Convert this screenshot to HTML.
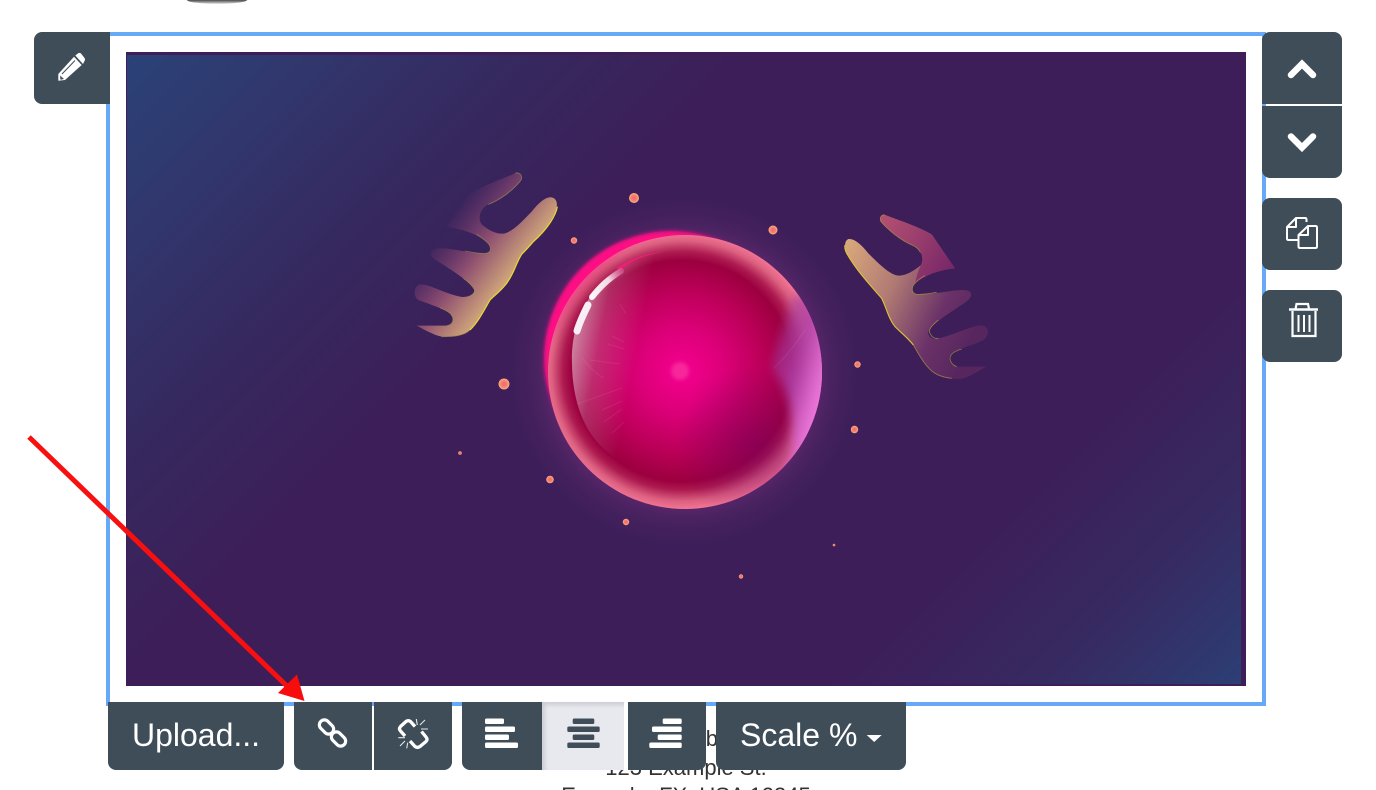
<!DOCTYPE html>
<html>
<head>
<meta charset="utf-8">
<style>
html,body{margin:0;padding:0;background:#fff;font-family:"Liberation Sans",sans-serif}
#p{position:relative;width:1376px;height:790px;overflow:hidden;background:#fff}
.t{position:absolute;left:386px;width:600px;text-align:center;font-size:22px;line-height:28px;color:#333;white-space:nowrap}
.frame{position:absolute;left:106px;top:32px;width:1152px;height:666px;border:4px solid #66a9f8}
.b{position:absolute;background:#3f4d58;color:#fff;font-size:32px;line-height:66px;text-align:center}
svg{position:absolute;left:0;top:0}
</style>
</head>
<body>
<div id="p">
<div class="t" style="top:725px;left:118px;text-align:right">Example Inc. Ab</div>
<div class="t" style="top:754px">123 Example St.</div>
<div class="t" style="top:782px">Example, FX, USA 12345</div>
<div class="frame"></div>

<svg width="1376" height="790" viewBox="0 0 1376 790" style="z-index:1">
<defs>
<linearGradient id="bg" gradientUnits="userSpaceOnUse" x1="126" y1="52" x2="1003" y2="929">
<stop offset="0" stop-color="#2a4278"/><stop offset=".1" stop-color="#30386e"/><stop offset=".24" stop-color="#36285e"/><stop offset=".36" stop-color="#3d1e59"/><stop offset=".76" stop-color="#3d1e59"/><stop offset=".88" stop-color="#372a61"/><stop offset="1" stop-color="#2b3f75"/>
</linearGradient>
<radialGradient id="halo" gradientUnits="userSpaceOnUse" cx="684" cy="372" r="180">
<stop offset=".72" stop-color="#7a2d7c" stop-opacity=".6"/><stop offset=".84" stop-color="#5e2a6c" stop-opacity=".3"/><stop offset="1" stop-color="#4a2468" stop-opacity="0"/>
</radialGradient>
<radialGradient id="ball" gradientUnits="userSpaceOnUse" cx="682" cy="371" r="140">
<stop offset="0" stop-color="#f5008f"/><stop offset=".3" stop-color="#dc0078"/><stop offset=".58" stop-color="#bb0058"/><stop offset=".79" stop-color="#9c003f"/><stop offset=".85" stop-color="#ad1a50"/><stop offset=".93" stop-color="#dc6080"/><stop offset="1" stop-color="#f87a9a"/>
</radialGradient>
<linearGradient id="rightGlow" gradientUnits="userSpaceOnUse" x1="772" y1="370" x2="824" y2="385">
<stop offset="0" stop-color="#a03aa0" stop-opacity=".5"/><stop offset=".45" stop-color="#b040a8" stop-opacity=".9"/><stop offset="1" stop-color="#ee78dc"/>
</linearGradient>
<radialGradient id="lowerDark" gradientUnits="userSpaceOnUse" cx="755" cy="445" r="80">
<stop offset="0" stop-color="#7a0060" stop-opacity=".55"/><stop offset="1" stop-color="#7a0060" stop-opacity="0"/>
</radialGradient>
<linearGradient id="lobe" gradientUnits="userSpaceOnUse" x1="572" y1="350" x2="635" y2="362">
<stop offset="0" stop-color="#fff" stop-opacity=".5"/><stop offset=".4" stop-color="#fff" stop-opacity=".17"/><stop offset="1" stop-color="#fff" stop-opacity="0"/>
</linearGradient>
<linearGradient id="cres" gradientUnits="userSpaceOnUse" x1="590" y1="300" x2="548" y2="265">
<stop offset="0" stop-color="#ff0a84" stop-opacity="0"/><stop offset="1" stop-color="#ff0a84" stop-opacity=".8"/>
</linearGradient>
<linearGradient id="hl" gradientUnits="userSpaceOnUse" x1="592" y1="297" x2="622" y2="270">
<stop offset="0" stop-color="#fff" stop-opacity=".95"/><stop offset=".6" stop-color="#fff" stop-opacity=".8"/><stop offset="1" stop-color="#ff90d0" stop-opacity=".3"/>
</linearGradient>
<radialGradient id="dot"><stop offset="0" stop-color="#f5637a"/><stop offset=".55" stop-color="#f77f70"/><stop offset="1" stop-color="#f6b27a"/></radialGradient>
<linearGradient id="lh" gradientUnits="userSpaceOnUse" x1="176" y1="132" x2="376" y2="282">
<stop offset="0" stop-color="#7a3a70" stop-opacity=".08"/><stop offset=".5" stop-color="#8e4f70"/><stop offset="1" stop-color="#d2a87a"/>
</linearGradient>
<linearGradient id="rh" gradientUnits="userSpaceOnUse" x1="30" y1="100" x2="460" y2="290">
<stop offset="0" stop-color="#dcaa7c"/><stop offset=".4" stop-color="#b07a74"/><stop offset=".75" stop-color="#6a3268"/><stop offset="1" stop-color="#58265f"/>
</linearGradient>
<linearGradient id="rh2" gradientUnits="userSpaceOnUse" x1="140" y1="30" x2="350" y2="180">
<stop offset="0" stop-color="#b14470"/><stop offset="1" stop-color="#7a2468"/>
</linearGradient>
<linearGradient id="top" gradientUnits="userSpaceOnUse" x1="0" y1="0" x2="0" y2="3.800"><stop offset="0" stop-color="#4a4a4a"/><stop offset="1" stop-color="#d8d8d8"/></linearGradient>
<filter id="b1" x="-20%" y="-20%" width="140%" height="140%"><feGaussianBlur stdDeviation="1.800"/></filter>
<filter id="b5" x="-40%" y="-40%" width="180%" height="180%"><feGaussianBlur stdDeviation="5"/></filter>
<clipPath id="ballclip"><circle cx="685" cy="372" r="137"/></clipPath>
</defs>

<ellipse cx="217" cy="0" rx="30" ry="3.800" fill="url(#top)"/>

<rect x="126" y="52" width="1120" height="634" fill="#3f1d58"/>
<rect x="127" y="55" width="1114" height="629" fill="url(#bg)"/>

<circle cx="684" cy="372" r="180" fill="url(#halo)"/>
<circle cx="671" cy="358" r="127" fill="#ff0a84" filter="url(#b1)"/>
<circle cx="685" cy="372" r="137" fill="url(#ball)"/>

<g clip-path="url(#ballclip)">
<circle cx="755" cy="445" r="80" fill="url(#lowerDark)"/>
<path d="M792 295 C784 330 774 350 772 370 C786 385 796 410 792 455 L785 480 L830 470 L830 295 Z" fill="url(#rightGlow)" filter="url(#b5)"/>
<path d="M553 340 C565 295 600 255 650 240" stroke="url(#cres)" stroke-width="9" fill="none" filter="url(#b1)"/>
<path d="M572 365 C570 310 600 265 664 252 L680 370 L640 468 C590 455 573 410 572 365Z" fill="url(#lobe)"/>
<path d="M620 270 C632 260 648 254 664 252 C648 253 634 257 616 268 Z" fill="#f0207a" opacity=".9"/>
<g stroke="#fff" stroke-opacity=".08" stroke-width="1" fill="none">
<path d="M620 304 L626 314"/><path d="M612 336 L624 342"/><path d="M608 344 L624 349"/><path d="M590 360 L620 364"/><path d="M577 404 L622 388"/><path d="M602 410 L622 401"/><path d="M604 422 L622 409"/><path d="M612 433 L624 422"/><path d="M582 358 C590 368 598 375 604 378"/><path d="M774 368 C785 358 795 345 805 330"/>
</g>
</g>
<circle cx="680" cy="371" r="9" fill="#ff60b0" opacity=".4" filter="url(#b1)"/>
<path d="M592 297 C600 287 608 279 621 271" stroke="url(#hl)" stroke-width="6" fill="none" stroke-linecap="round"/>
<path d="M588 305 C584 313 580 321 577 331" stroke="#f8eef5" stroke-width="7" fill="none" stroke-linecap="round"/>

<g fill="url(#dot)">
<circle cx="634" cy="198" r="5"/><circle cx="773" cy="230" r="4.500"/><circle cx="574" cy="240.500" r="3.200"/><circle cx="504" cy="384" r="5.500"/><circle cx="857.500" cy="364.500" r="3.200"/><circle cx="854.500" cy="429.500" r="3.700"/><circle cx="460" cy="453" r="1.800"/><circle cx="550" cy="479.500" r="3.800"/><circle cx="626" cy="522" r="3.200"/><circle cx="834" cy="545" r="1.300"/><circle cx="741" cy="576.500" r="2.200"/>
</g>

<g transform="translate(400 165) scale(.33333)">
<path d="M140 185 L205 90 C240 65 300 45 345 25 C360 20 370 35 362 47 C340 75 300 105 265 118 C240 130 232 160 245 178 C265 195 290 210 315 205 C345 195 370 165 395 140 C415 115 435 95 455 97 C472 100 475 120 465 145 C445 190 400 230 365 268 C345 300 345 320 320 355 C300 380 285 390 270 405 C250 440 235 470 210 495 C190 515 150 515 125 515 C100 510 75 495 50 482 L140 482 C160 480 165 460 150 445 C130 430 80 415 55 405 C40 395 40 370 55 360 C75 350 130 385 180 395 C205 400 228 385 222 372 C200 340 130 300 100 280 C85 265 95 250 120 250 C150 248 190 262 240 265 C265 268 278 260 268 240 C250 215 200 195 140 185 Z" fill="url(#lh)"/>
<path d="M345 25 C360 20 370 35 362 47 C340 75 300 105 265 118 M195 258 C220 263 230 264 240 265 C265 268 278 260 268 240 C260 228 245 218 230 208 M205 397 C218 393 228 385 222 372 C215 358 205 350 190 340 M140 482 C160 480 165 460 150 445 C142 438 132 433 120 428 M210 495 C190 515 150 515 125 515" fill="none" stroke="#a09048" stroke-opacity=".7" stroke-width="2.500"/>
<path d="M472 125 C468 150 445 190 400 230 C385 248 375 258 365 268 C345 300 345 320 320 355 C300 380 285 390 270 405 C250 440 235 470 210 495" fill="none" stroke="#e8dc30" stroke-width="3.500"/>
</g>
<g transform="translate(835 205) scale(.33333)">
<path d="M360 190 L290 88 C250 65 190 45 150 30 C140 28 132 38 138 50 C160 75 195 105 235 122 C260 135 268 160 258 180 C240 195 215 212 190 212 C165 210 130 175 100 145 C80 120 60 100 40 102 C28 108 28 125 35 145 C60 190 100 235 140 280 C155 310 160 340 180 365 C200 385 220 400 235 420 C255 455 275 490 300 505 C325 520 365 525 385 520 C405 515 430 498 455 485 L365 485 C345 480 335 460 350 445 C370 430 420 420 445 405 C465 390 462 370 445 362 C420 355 350 395 300 402 C285 402 272 385 285 372 C310 340 370 310 400 285 C415 270 410 255 385 255 C350 255 290 270 245 268 C230 265 228 245 240 235 C270 210 310 195 360 190 Z" fill="url(#rh)"/>
<path d="M360 190 L290 88 C250 65 190 45 150 30 C140 28 132 38 138 50 C160 75 195 105 235 122 C260 135 268 160 258 180 C250 195 248 205 240 235 C270 210 310 195 360 190Z" fill="url(#rh2)" opacity=".85"/>
<path d="M150 30 C140 28 132 38 138 50 C160 75 195 105 235 122 C245 127 252 133 256 142 M270 212 C250 222 232 240 232 250 C230 262 238 267 245 268 C262 269 285 266 305 262 M310 345 C295 358 278 372 285 385 C290 396 298 402 310 400 M380 432 C362 438 345 445 345 460 C345 472 355 482 365 485 M235 420 C255 455 275 490 300 505 C315 514 335 518 350 520" fill="none" stroke="#a89040" stroke-opacity=".8" stroke-width="2.500"/>
<path d="M30 120 C28 128 30 135 35 145 C60 190 100 235 140 280 C155 310 160 340 180 365 C200 385 220 400 235 420" fill="none" stroke="#dcc830" stroke-width="3.200"/>
</g>
</svg>

<div class="b" style="left:34px;top:32px;width:76px;height:72px;border-radius:8px 0 0 8px;z-index:2"></div>
<div class="b" style="left:1262px;top:32px;width:80px;height:72px;border-radius:8px 8px 0 0;z-index:2"></div>
<div class="b" style="left:1262px;top:106px;width:80px;height:72px;border-radius:0 0 8px 8px;z-index:2"></div>
<div class="b" style="left:1262px;top:198px;width:80px;height:72px;border-radius:8px;z-index:2"></div>
<div class="b" style="left:1262px;top:290px;width:80px;height:72px;border-radius:8px;z-index:2"></div>
<div class="b" style="left:108px;top:702px;width:176px;height:68px;border-radius:0 0 8px 8px;z-index:2">Upload...</div>
<div class="b" style="left:294px;top:702px;width:78px;height:68px;border-radius:0 0 0 8px;z-index:2"></div>
<div class="b" style="left:374px;top:702px;width:78px;height:68px;border-radius:0 0 8px 0;z-index:2"></div>
<div class="b" style="left:462px;top:702px;width:80px;height:68px;border-radius:0 0 0 8px;z-index:2"></div>
<div class="b" style="left:542px;top:702px;width:82px;height:68px;background:#e8e9ef;box-shadow:inset 3px 3px 4px rgba(0,0,0,.12),2px 0 0 #dcdde2;z-index:2"></div>
<div class="b" style="left:624px;top:702px;width:4px;height:68px;background:#fff;z-index:2"></div>
<div class="b" style="left:628px;top:702px;width:78px;height:68px;border-radius:0 0 8px 0;z-index:2"></div>
<div class="b" style="left:716px;top:702px;width:190px;height:68px;border-radius:0 0 8px 8px;text-align:left;text-indent:24px;z-index:2">Scale %</div>

<svg width="1376" height="790" viewBox="0 0 1376 790" style="z-index:3">
<path d="M29 437 L290 689" stroke="#f81010" stroke-width="5" fill="none"/>
<path d="M304.500 701 L278 693 L297 674.500 Z" fill="#f80c0c"/>

<path d="M58.300 74 L74 56.700 L81.700 65 L65 80 L58.300 80.800 Z" fill="#fff"/>
<path d="M75.300 55.500 L78.500 53 Q80 52.500 81 53.500 L84.500 58 Q85.500 59.500 84.500 61 L83 64 Z" fill="#fff"/>
<path d="M62 74 L75 60.500" stroke="#3f4d58" stroke-width="1" fill="none"/>
<path d="M60 75.500 L64 79 L60.500 79.800 Z" fill="#3f4d58"/>

<path d="M1291 75 L1302 64 L1313 75" fill="none" stroke="#fff" stroke-width="6.500" stroke-linecap="round"/>
<path d="M1291 136.500 L1302 147.500 L1313 136.500" fill="none" stroke="#fff" stroke-width="6.500" stroke-linecap="round"/>

<g fill="none" stroke="#fff" stroke-width="2" stroke-linejoin="round">
<path d="M1306.500 222 L1306.500 219.500 Q1306.500 218 1305 218 L1296 218 L1287 227 L1287 238.500 Q1287 240 1288.500 240 L1298 240"/>
<path d="M1296 218 L1296 227 L1287 227"/>
<path d="M1308 226 L1315.500 226 Q1317 226 1317 227.500 L1317 246.500 Q1317 248 1315.500 248 L1300 248 Q1298.500 248 1298.500 246.500 L1298.500 235 Z"/>
<path d="M1308 226 L1308 235 L1298.500 235"/>
</g>

<g fill="none" stroke="#fff" stroke-width="2.200">
<path d="M1289 309.500 L1318 309.500" stroke-width="2.500"/>
<path d="M1295.500 309 L1296.500 304 L1308 304 L1309 309"/>
<path d="M1292.500 311 L1292.500 336 L1315.500 336 L1315.500 311"/>
<path d="M1298.500 315 L1298.500 332 M1304 315 L1304 332 M1309.500 315 L1309.500 332" stroke-width="2"/>
</g>

<g fill="none" stroke="#fff" stroke-width="3.200">
<rect x="318.500" y="722" width="16" height="10" rx="5" transform="rotate(45 326.500 727)"/>
<rect x="330.500" y="734" width="16" height="10" rx="5" transform="rotate(45 338.500 739)"/>
</g>

<g fill="none" stroke="#fff" stroke-width="3.300" stroke-linejoin="round">
<path d="M415 726.500 L410.500 721.500 Q408.300 719.800 406 721.500 L400.500 726.500 Q398.500 729 400.500 731 L405 736"/>
<path d="M421.500 731.500 L426 737 Q428 739.500 426 741.500 L420 746.500 Q417.500 748.300 415 746.500 L410 741"/>
</g>
<g fill="none" stroke="#e4e7ea" stroke-width="1.100">
<path d="M416.300 719 L417.300 725 M425 720 L420 725 M421 729 L428 729 M398.300 737.700 L405 737.700 M400 746 L405 741 M406.700 748.300 L407.700 742.700"/>
</g>

<g fill="#fff">
<rect x="485" y="718.500" width="19" height="5.500" rx="1.500"/><rect x="485" y="726.500" width="30" height="5.500" rx="1.500"/><rect x="485" y="734.500" width="24" height="5.500" rx="1.500"/><rect x="485" y="742.500" width="33" height="5.500" rx="1.500"/>
</g>
<g fill="#3f4d58">
<rect x="572.700" y="718.500" width="21.600" height="5.500" rx="1.500"/><rect x="567.300" y="726.500" width="32.400" height="5.500" rx="1.500"/><rect x="572.700" y="734.500" width="21.600" height="5.500" rx="1.500"/><rect x="567.300" y="742.500" width="32.400" height="5.500" rx="1.500"/>
</g>
<g fill="#fff">
<rect x="662.700" y="718.500" width="19" height="5.500" rx="1.500"/><rect x="652" y="726.500" width="29.700" height="5.500" rx="1.500"/><rect x="657.700" y="734.500" width="24" height="5.500" rx="1.500"/><rect x="649.300" y="742.500" width="32.400" height="5.500" rx="1.500"/>
</g>
<path d="M866.700 735 L881.700 735 L874.200 742 Z" fill="#fff"/>
</svg>
</div>
</body>
</html>
